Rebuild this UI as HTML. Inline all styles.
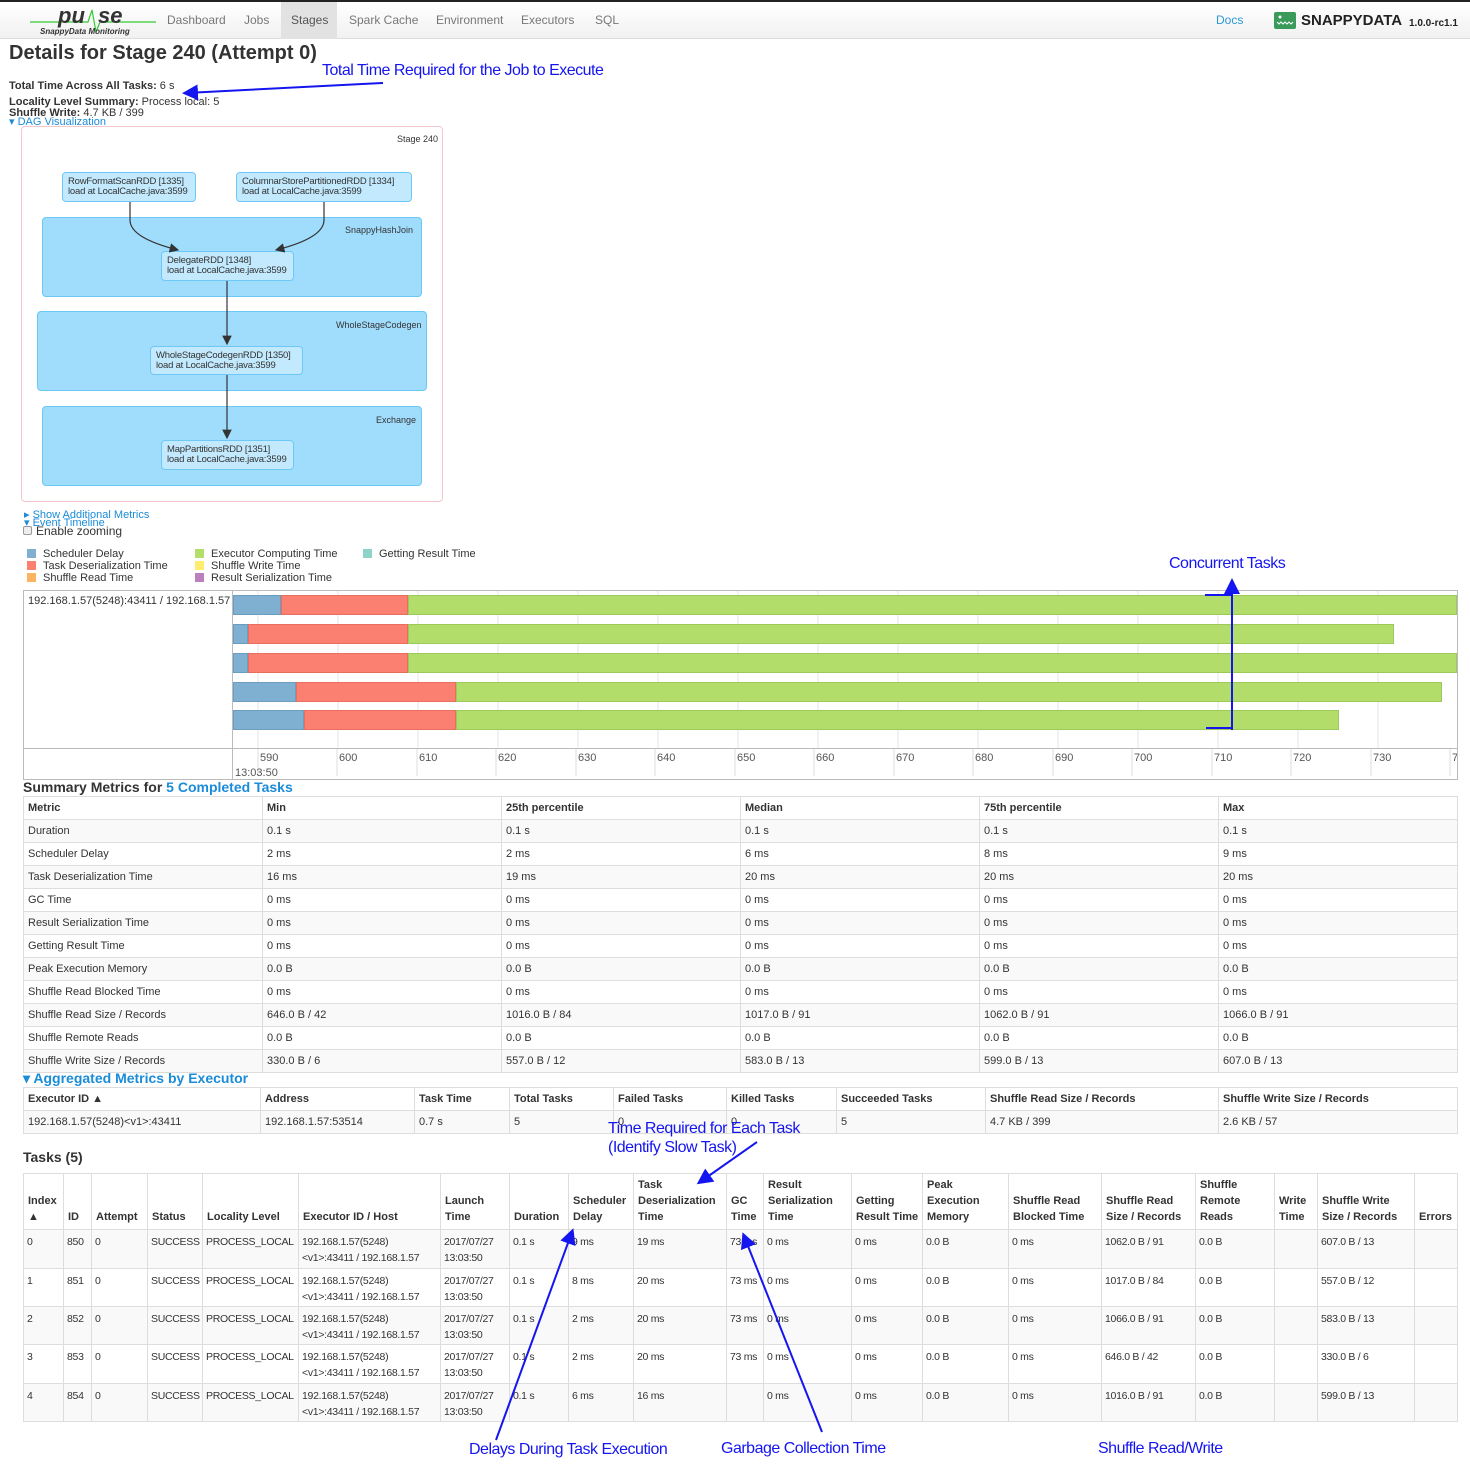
<!DOCTYPE html>
<html><head><meta charset="utf-8">
<style>
*{box-sizing:border-box;margin:0;padding:0}
body{width:1470px;height:1469px;position:relative;background:#fff;font-family:"Liberation Sans",sans-serif;font-size:11px;color:#333;overflow:hidden}
.a{position:absolute}
.nav{left:0;top:0;width:1470px;height:39px;border-top:2px solid #222;background:linear-gradient(#fff,#f1f1f1);border-bottom:1px solid #ddd}
.nav span{position:absolute;top:11px;font-size:12px;color:#777}
.link{color:#1a8cd8}
.ann{position:absolute;color:#1515f0;font-family:"Liberation Sans Narrow","Liberation Sans",sans-serif;font-size:16px;letter-spacing:-0.5px;white-space:nowrap}
.cl{position:absolute;background:#a0dcfc;border:1px solid #6ec8f5;border-radius:4px}
.nd{position:absolute;background:#c2e9fd;border:1px solid #6ec8f5;border-radius:4px;font-size:9.5px;line-height:10px;padding:4px 5px;color:#333;white-space:nowrap;letter-spacing:-.2px}
.cll{position:absolute;font-size:9px;color:#333}
table{border-collapse:collapse;table-layout:fixed;position:absolute;left:23px;width:1434px}
td,th{border:1px solid #ddd;padding:0 4px;text-align:left;vertical-align:middle;white-space:nowrap;overflow:hidden;font-size:11px}
th{font-weight:bold;color:#333}
.sm td,.sm th{height:23px}
.sm tr:nth-child(odd) td{background:#f9f9f9}
.tk th{vertical-align:bottom;padding-bottom:4px;line-height:16px;white-space:normal;font-size:11px;padding-left:4px;padding-right:2px}
.tk td{vertical-align:top;padding-top:4px;line-height:16px;font-size:10.5px;padding-left:3px;padding-right:1px;letter-spacing:-0.3px}
.tk tbody tr:nth-child(odd) td{background:#f9f9f9}
.bar{position:absolute;height:20px}
.b{background:#7fafd1;border:1px solid #6b9dc0}
.r{background:#fb8072;border:1px solid #e66f62}
.g{background:#b3dd6a;border:1px solid #9cc95a}
.lg{position:absolute;width:9px;height:9px}
.lt{position:absolute;font-size:11px;color:#333;white-space:nowrap}
h4{position:absolute;font-size:14px;font-weight:bold;color:#333}
</style></head><body>

<div class="a nav">
 <svg class="a" style="left:28px;top:0" width="130" height="36">
  <path d="M2 20 H60 L64 8 L68 30 L72 20 H128" stroke="#3c3" stroke-width="1.2" fill="none"/>
  <text x="30" y="21" font-family="Liberation Sans" font-weight="bold" font-style="italic" font-size="22" fill="#333">pu</text>
  <text x="70" y="21" font-family="Liberation Sans" font-weight="bold" font-style="italic" font-size="22" fill="#333">se</text>
  <text x="12" y="32" font-family="Liberation Sans" font-weight="bold" font-style="italic" font-size="8" fill="#333">SnappyData Monitoring</text>
 </svg>
 <span style="left:167px">Dashboard</span>
 <span style="left:244px">Jobs</span>
 <div class="a" style="left:281px;top:0;width:56px;height:37px;background:#e2e2e2"></div>
 <span style="left:291px;color:#555">Stages</span>
 <span style="left:349px">Spark Cache</span>
 <span style="left:436px">Environment</span>
 <span style="left:521px">Executors</span>
 <span style="left:595px">SQL</span>
 <span style="left:1216px;color:#2a9ad8">Docs</span>
 <svg class="a" style="left:1274px;top:10px" width="22" height="17"><rect width="22" height="17" rx="2" fill="#3a9a5a"/><path d="M3 10 l2 2 2-2 2 2 2-2 2 2 2-2 2 2 2-2" stroke="#fff" fill="none"/><circle cx="6" cy="5" r="1.5" fill="#fff"/></svg>
 <span style="left:1301px;top:10px;font-size:15px;font-weight:bold;color:#222">SNAPPYDATA</span>
 <span style="left:1409px;top:16px;font-size:10px;font-weight:bold;color:#222">1.0.0-rc1.1</span>
</div>

<div class="a" style="left:9px;top:42px;font-size:20px;font-weight:bold;color:#333">Details for Stage 240 (Attempt 0)</div>
<div class="a" style="left:9px;top:80px"><b>Total Time Across All Tasks:</b> 6 s</div>
<div class="a" style="left:9px;top:96px"><b>Locality Level Summary:</b> Process local: 5</div>
<div class="a" style="left:9px;top:107px"><b>Shuffle Write:</b> 4.7 KB / 399</div>
<div class="a link" style="left:9px;top:115px;font-size:11px">&#9662; DAG Visualization</div>

<div class="a" style="left:21px;top:126px;width:422px;height:376px;border:1px solid #f6c6cf;border-radius:4px"></div>
<div class="cll" style="left:397px;top:134px">Stage 240</div>
<div class="cl" style="left:42px;top:217px;width:380px;height:80px"></div>
<div class="cll" style="left:345px;top:225px">SnappyHashJoin</div>
<div class="cl" style="left:37px;top:311px;width:390px;height:80px"></div>
<div class="cll" style="left:336px;top:320px">WholeStageCodegen</div>
<div class="cl" style="left:42px;top:406px;width:380px;height:80px"></div>
<div class="cll" style="left:376px;top:415px">Exchange</div>
<div class="nd" style="left:62px;top:172px;width:134px;height:30px">RowFormatScanRDD [1335]<br>load at LocalCache.java:3599</div>
<div class="nd" style="left:236px;top:172px;width:176px;height:30px">ColumnarStorePartitionedRDD [1334]<br>load at LocalCache.java:3599</div>
<div class="nd" style="left:161px;top:251px;width:133px;height:30px">DelegateRDD [1348]<br>load at LocalCache.java:3599</div>
<div class="nd" style="left:150px;top:346px;width:153px;height:29px">WholeStageCodegenRDD [1350]<br>load at LocalCache.java:3599</div>
<div class="nd" style="left:161px;top:440px;width:133px;height:30px">MapPartitionsRDD [1351]<br>load at LocalCache.java:3599</div>
<svg class="a" style="left:0;top:0" width="450" height="500">
 <defs><marker id="m" markerWidth="8" markerHeight="8" refX="7" refY="4" orient="auto"><path d="M0 0 L8 4 L0 8z" fill="#333"/></marker></defs>
 <path d="M130 202 V220 Q130 238 178 250" stroke="#333" stroke-width="1.2" fill="none" marker-end="url(#m)"/>
 <path d="M324 202 V220 Q324 238 276 250" stroke="#333" stroke-width="1.2" fill="none" marker-end="url(#m)"/>
 <path d="M227 281 V344" stroke="#333" stroke-width="1.2" fill="none" marker-end="url(#m)"/>
 <path d="M227 375 V438" stroke="#333" stroke-width="1.2" fill="none" marker-end="url(#m)"/>
</svg>

<div class="a link" style="left:24px;top:508px">&#9656; Show Additional Metrics</div>
<div class="a link" style="left:24px;top:516px">&#9662; Event Timeline</div>
<div class="a" style="left:23px;top:526px;width:9px;height:9px;border:1px solid #999;border-radius:2px;background:#eee"></div>
<div class="a" style="left:36px;top:524px;font-size:12px">Enable zooming</div>

<div class="lg" style="left:27px;top:549px;background:#7fafd1"></div><div class="lt" style="left:43px;top:548px">Scheduler Delay</div>
<div class="lg" style="left:27px;top:561px;background:#fb8072"></div><div class="lt" style="left:43px;top:560px">Task Deserialization Time</div>
<div class="lg" style="left:27px;top:573px;background:#fdb462"></div><div class="lt" style="left:43px;top:572px">Shuffle Read Time</div>
<div class="lg" style="left:195px;top:549px;background:#b3de69"></div><div class="lt" style="left:211px;top:548px">Executor Computing Time</div>
<div class="lg" style="left:195px;top:561px;background:#ffed6f"></div><div class="lt" style="left:211px;top:560px">Shuffle Write Time</div>
<div class="lg" style="left:195px;top:573px;background:#bc80bd"></div><div class="lt" style="left:211px;top:572px">Result Serialization Time</div>
<div class="lg" style="left:363px;top:549px;background:#8dd3c7"></div><div class="lt" style="left:379px;top:548px;width:104px;overflow:hidden">Getting Result Time</div>

<div class="a" style="left:23px;top:590px;width:1435px;height:190px;border:1px solid #bbb"></div>
<div class="a" style="left:232px;top:590px;width:1px;height:190px;background:#bbb"></div>
<div class="a" style="left:23px;top:748px;width:1435px;height:1px;background:#bbb"></div>
<div class="lt" style="left:28px;top:595px">192.168.1.57(5248):43411 / 192.168.1.57</div>
<svg class="a" style="left:233px;top:591px" width="1224" height="189">
 <g stroke="#e5e5e5"><path d="M25 0V157M105 0V157M185 0V157M265 0V157M345 0V157M425 0V157M505 0V157M585 0V157M665 0V157M745 0V157M825 0V157M905 0V157M985 0V157M1065 0V157M1145 0V157"/></g>
 <g stroke="#ddd"><path d="M25 158V185M104 158V185M184 158V185M263 158V185M343 158V185M422 158V185M502 158V185M581 158V185M661 158V185M740 158V185M820 158V185M899 158V185M979 158V185M1058 158V185M1138 158V185M1217 158V185"/></g>
 <g font-family="Liberation Sans" font-size="11" fill="#555">
  <text x="27" y="170">590</text><text x="106" y="170">600</text><text x="186" y="170">610</text><text x="265" y="170">620</text><text x="345" y="170">630</text><text x="424" y="170">640</text><text x="504" y="170">650</text><text x="583" y="170">660</text><text x="663" y="170">670</text><text x="742" y="170">680</text><text x="822" y="170">690</text><text x="901" y="170">700</text><text x="981" y="170">710</text><text x="1060" y="170">720</text><text x="1140" y="170">730</text><text x="1219" y="170">7</text>
  <text x="2" y="185">13:03:50</text>
 </g>
</svg>
<div class="bar b" style="left:233px;top:595px;width:48px"></div><div class="bar r" style="left:281px;top:595px;width:127px"></div><div class="bar g" style="left:408px;top:595px;width:1049px"></div>
<div class="bar b" style="left:233px;top:624px;width:15px"></div><div class="bar r" style="left:248px;top:624px;width:160px"></div><div class="bar g" style="left:408px;top:624px;width:986px"></div>
<div class="bar b" style="left:233px;top:653px;width:15px"></div><div class="bar r" style="left:248px;top:653px;width:160px"></div><div class="bar g" style="left:408px;top:653px;width:1049px"></div>
<div class="bar b" style="left:233px;top:682px;width:63px"></div><div class="bar r" style="left:296px;top:682px;width:160px"></div><div class="bar g" style="left:456px;top:682px;width:986px"></div>
<div class="bar b" style="left:233px;top:710px;width:71px"></div><div class="bar r" style="left:304px;top:710px;width:152px"></div><div class="bar g" style="left:456px;top:710px;width:883px"></div>

<h4 style="left:23px;top:779px">Summary Metrics for <span class="link">5 Completed Tasks</span></h4>
<table class="sm" style="top:796px">
<colgroup><col style="width:239px"><col style="width:239px"><col style="width:239px"><col style="width:239px"><col style="width:239px"><col style="width:239px"></colgroup>
<thead><tr><th>Metric</th><th>Min</th><th>25th percentile</th><th>Median</th><th>75th percentile</th><th>Max</th></tr></thead>
<tbody>
<tr><td>Duration</td><td>0.1 s</td><td>0.1 s</td><td>0.1 s</td><td>0.1 s</td><td>0.1 s</td></tr>
<tr><td>Scheduler Delay</td><td>2 ms</td><td>2 ms</td><td>6 ms</td><td>8 ms</td><td>9 ms</td></tr>
<tr><td>Task Deserialization Time</td><td>16 ms</td><td>19 ms</td><td>20 ms</td><td>20 ms</td><td>20 ms</td></tr>
<tr><td>GC Time</td><td>0 ms</td><td>0 ms</td><td>0 ms</td><td>0 ms</td><td>0 ms</td></tr>
<tr><td>Result Serialization Time</td><td>0 ms</td><td>0 ms</td><td>0 ms</td><td>0 ms</td><td>0 ms</td></tr>
<tr><td>Getting Result Time</td><td>0 ms</td><td>0 ms</td><td>0 ms</td><td>0 ms</td><td>0 ms</td></tr>
<tr><td>Peak Execution Memory</td><td>0.0 B</td><td>0.0 B</td><td>0.0 B</td><td>0.0 B</td><td>0.0 B</td></tr>
<tr><td>Shuffle Read Blocked Time</td><td>0 ms</td><td>0 ms</td><td>0 ms</td><td>0 ms</td><td>0 ms</td></tr>
<tr><td>Shuffle Read Size / Records</td><td>646.0 B / 42</td><td>1016.0 B / 84</td><td>1017.0 B / 91</td><td>1062.0 B / 91</td><td>1066.0 B / 91</td></tr>
<tr><td>Shuffle Remote Reads</td><td>0.0 B</td><td>0.0 B</td><td>0.0 B</td><td>0.0 B</td><td>0.0 B</td></tr>
<tr><td>Shuffle Write Size / Records</td><td>330.0 B / 6</td><td>557.0 B / 12</td><td>583.0 B / 13</td><td>599.0 B / 13</td><td>607.0 B / 13</td></tr>
</tbody></table>

<h4 class="link" style="left:23px;top:1070px;color:#1a8cd8">&#9662; Aggregated Metrics by Executor</h4>
<table class="sm" style="top:1087px">
<colgroup><col style="width:237px"><col style="width:154px"><col style="width:95px"><col style="width:104px"><col style="width:113px"><col style="width:110px"><col style="width:149px"><col style="width:233px"><col style="width:239px"></colgroup>
<thead><tr><th>Executor ID &#9650;</th><th>Address</th><th>Task Time</th><th>Total Tasks</th><th>Failed Tasks</th><th>Killed Tasks</th><th>Succeeded Tasks</th><th>Shuffle Read Size / Records</th><th>Shuffle Write Size / Records</th></tr></thead>
<tbody><tr><td>192.168.1.57(5248)&lt;v1&gt;:43411</td><td>192.168.1.57:53514</td><td>0.7 s</td><td>5</td><td>0</td><td>0</td><td>5</td><td>4.7 KB / 399</td><td>2.6 KB / 57</td></tr></tbody></table>

<h4 style="left:23px;top:1149px">Tasks (5)</h4>
<table class="tk" style="top:1173px">
<colgroup><col style="width:40px"><col style="width:28px"><col style="width:56px"><col style="width:55px"><col style="width:96px"><col style="width:142px"><col style="width:69px"><col style="width:59px"><col style="width:65px"><col style="width:93px"><col style="width:37px"><col style="width:88px"><col style="width:71px"><col style="width:86px"><col style="width:93px"><col style="width:94px"><col style="width:79px"><col style="width:43px"><col style="width:97px"><col style="width:43px"></colgroup>
<thead><tr style="height:56px"><th>Index<br>&#9650;</th><th>ID</th><th>Attempt</th><th>Status</th><th>Locality Level</th><th>Executor ID / Host</th><th>Launch<br>Time</th><th>Duration</th><th>Scheduler Delay</th><th>Task Deserialization Time</th><th>GC Time</th><th>Result Serialization Time</th><th>Getting Result Time</th><th>Peak Execution Memory</th><th>Shuffle Read Blocked Time</th><th>Shuffle Read Size / Records</th><th>Shuffle Remote Reads</th><th>Write Time</th><th>Shuffle Write Size / Records</th><th>Errors</th></tr></thead>
<tbody>
<tr style="height:39px"><td>0</td><td>850</td><td>0</td><td>SUCCESS</td><td>PROCESS_LOCAL</td><td>192.168.1.57(5248)<br>&lt;v1&gt;:43411 / 192.168.1.57</td><td>2017/07/27<br>13:03:50</td><td>0.1 s</td><td>9 ms</td><td>19 ms</td><td>73 ms</td><td>0 ms</td><td>0 ms</td><td>0.0 B</td><td>0 ms</td><td>1062.0 B / 91</td><td>0.0 B</td><td></td><td>607.0 B / 13</td><td></td></tr>
<tr style="height:38px"><td>1</td><td>851</td><td>0</td><td>SUCCESS</td><td>PROCESS_LOCAL</td><td>192.168.1.57(5248)<br>&lt;v1&gt;:43411 / 192.168.1.57</td><td>2017/07/27<br>13:03:50</td><td>0.1 s</td><td>8 ms</td><td>20 ms</td><td>73 ms</td><td>0 ms</td><td>0 ms</td><td>0.0 B</td><td>0 ms</td><td>1017.0 B / 84</td><td>0.0 B</td><td></td><td>557.0 B / 12</td><td></td></tr>
<tr style="height:38px"><td>2</td><td>852</td><td>0</td><td>SUCCESS</td><td>PROCESS_LOCAL</td><td>192.168.1.57(5248)<br>&lt;v1&gt;:43411 / 192.168.1.57</td><td>2017/07/27<br>13:03:50</td><td>0.1 s</td><td>2 ms</td><td>20 ms</td><td>73 ms</td><td>0 ms</td><td>0 ms</td><td>0.0 B</td><td>0 ms</td><td>1066.0 B / 91</td><td>0.0 B</td><td></td><td>583.0 B / 13</td><td></td></tr>
<tr style="height:39px"><td>3</td><td>853</td><td>0</td><td>SUCCESS</td><td>PROCESS_LOCAL</td><td>192.168.1.57(5248)<br>&lt;v1&gt;:43411 / 192.168.1.57</td><td>2017/07/27<br>13:03:50</td><td>0.1 s</td><td>2 ms</td><td>20 ms</td><td>73 ms</td><td>0 ms</td><td>0 ms</td><td>0.0 B</td><td>0 ms</td><td>646.0 B / 42</td><td>0.0 B</td><td></td><td>330.0 B / 6</td><td></td></tr>
<tr style="height:38px"><td>4</td><td>854</td><td>0</td><td>SUCCESS</td><td>PROCESS_LOCAL</td><td>192.168.1.57(5248)<br>&lt;v1&gt;:43411 / 192.168.1.57</td><td>2017/07/27<br>13:03:50</td><td>0.1 s</td><td>6 ms</td><td>16 ms</td><td></td><td>0 ms</td><td>0 ms</td><td>0.0 B</td><td>0 ms</td><td>1016.0 B / 91</td><td>0.0 B</td><td></td><td>599.0 B / 13</td><td></td></tr>
</tbody></table>

<div class="ann" style="left:322px;top:62px">Total Time Required for the Job to Execute</div>
<div class="ann" style="left:1169px;top:555px">Concurrent Tasks</div>
<div class="ann" style="left:608px;top:1119px;line-height:19px">Time Required for Each Task<br>(Identify Slow Task)</div>
<div class="ann" style="left:469px;top:1441px">Delays During Task Execution</div>
<div class="ann" style="left:721px;top:1440px">Garbage Collection Time</div>
<div class="ann" style="left:1098px;top:1440px">Shuffle Read/Write</div>
<svg class="a" style="left:0;top:0" width="1470" height="1469">
 <defs><marker id="ba" markerWidth="8" markerHeight="8" refX="6" refY="4" orient="auto"><path d="M0 0 L8 4 L0 8z" fill="#1515f0"/></marker></defs>
 <g stroke="#1515f0" stroke-width="2" fill="none">
  <path d="M383 83 L186 93" marker-end="url(#ba)"/>
  <path d="M1232 730 V582" marker-end="url(#ba)"/>
  <path d="M1205 595 H1232 M1206 728 H1232"/>
  <path d="M757 1142 L700 1182" marker-end="url(#ba)"/>
  <path d="M496 1440 L572 1232" marker-end="url(#ba)"/>
  <path d="M822 1432 L744 1236" marker-end="url(#ba)"/>
 </g>
</svg>
</body></html>
